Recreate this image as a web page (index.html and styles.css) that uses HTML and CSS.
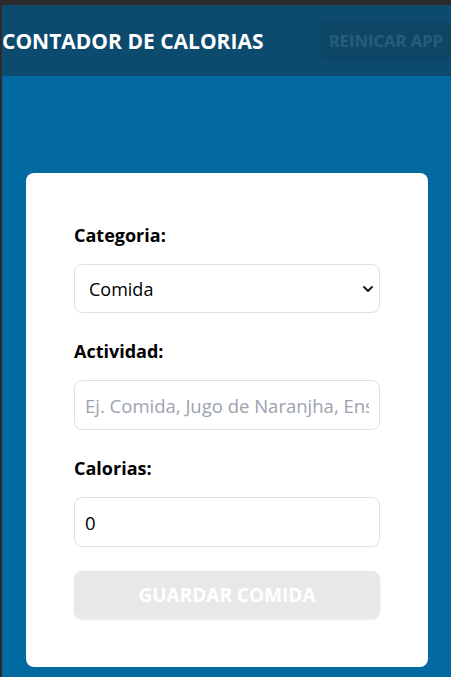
FILE: index.html
```html
<!DOCTYPE html>
<html lang="es">
<head>
<meta charset="utf-8">
<title>Contador de Calorias</title>
<link rel="stylesheet" href="styles.css">
</head>
<body>
<div class="frame">
  <header class="header">
    <div class="header-inner">
      <h1 class="title">Contador de Calorias</h1>
      <button class="btn btn-reset" disabled>Reinicar App</button>
    </div>
  </header>
  <main class="main">
    <form class="card">
      <div class="field">
        <label class="label" for="category">Categoria:</label>
        <div class="select-wrap">
          <select id="category" class="control select">
            <option>Comida</option>
            <option>Ejercicio</option>
          </select>
          <svg class="chevron" width="10" height="6" viewBox="0 0 10 6"><path d="M1 1l4 4 4-4" fill="none" stroke="#111" stroke-width="1.8" stroke-linecap="round" stroke-linejoin="round"/></svg>
        </div>
      </div>
      <div class="field">
        <label class="label" for="activity">Actividad:</label>
        <input id="activity" class="control" type="text" placeholder="Ej. Comida, Jugo de Naranjha, Ensalada, Pesas, Bicicleta">
      </div>
      <div class="field">
        <label class="label" for="calories">Calorias:</label>
        <input id="calories" class="control" type="number" value="0">
      </div>
      <button class="btn btn-save" type="submit" disabled>Guardar Comida</button>
    </form>
  </main>
</div>
</body>
</html>
```
FILE: styles.css
```css
* { box-sizing: border-box; }
html, body { margin: 0; padding: 0; }
body {
  font-family: "Open Sans", "Noto Sans", sans-serif;
  background: #2b2b2b;
  color: #000;
}
.frame {
  margin-top: 5px;
  margin-left: 2px;
  min-height: 672px;
  background: #0369a1;
}
.header {
  background: #0c4a6e;
  padding: 14px 0;
}
.header-inner {
  display: flex;
  justify-content: space-between;
  align-items: center;
}
.title {
  margin: 0;
  color: #fff;
  font-size: 21px;
  font-weight: 700;
  text-transform: uppercase;
  line-height: 28px;
  white-space: nowrap;
}
.btn {
  font-family: inherit;
  border: 0;
  background: #1f2937;
  color: #fff;
  font-weight: 700;
  text-transform: uppercase;
  opacity: 0.1;
}
.btn-reset {
  font-size: 16.6px;
  line-height: 23px;
  padding: 10px 8px;
  border-radius: 8px;
  white-space: nowrap;
}
.main {
  padding: 97px 20px 10px 24px;
}
.card {
  background: #fff;
  border-radius: 8px;
  padding: 48px;
  display: flex;
  flex-direction: column;
  gap: 24px;
  width: 402px;
}
.field {
  display: flex;
  flex-direction: column;
  gap: 15px;
}
.label {
  font-size: 18px;
  line-height: 28px;
  font-weight: 700;
  color: #000;
}
.control {
  font-family: inherit;
  font-size: 18.5px;
  line-height: 28px;
  height: 50px;
  width: 100%;
  padding: 10px;
  border: 1px solid #dbe1ea;
  border-radius: 8px;
  background: #fff;
  color: #000;
  outline: none;
}
.control::placeholder { color: #9ca3af; }
.select-wrap { position: relative; }
.select {
  appearance: none;
  -webkit-appearance: none;
  height: 49px;
  padding-left: 14px;
  font-size: 18px;
}
.chevron {
  position: absolute;
  right: 7px;
  top: 22px;
  pointer-events: none;
}
input[type=number]::-webkit-inner-spin-button,
input[type=number]::-webkit-outer-spin-button { -webkit-appearance: none; margin: 0; }
.btn-save {
  height: 48px;
  font-size: 19px;
  line-height: 28px;
  border-radius: 8px;
  box-shadow: 0 1px 3px rgba(0,0,0,0.6);
}
```
